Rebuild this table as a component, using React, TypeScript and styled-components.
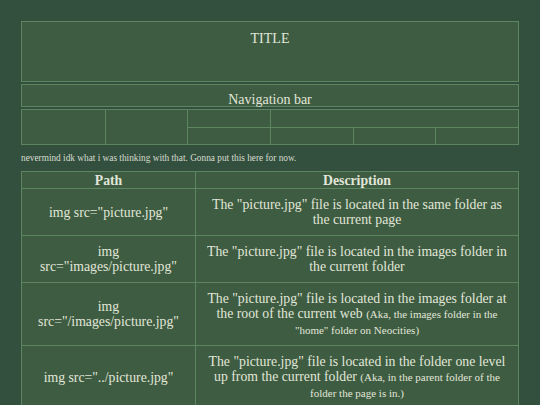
import React from "react";
import styled, { createGlobalStyle } from "styled-components";

const SERIF = `"Liberation Serif", "Times New Roman", Times, serif`;
const LINE = "#5c8560";
const PANEL = "#3d5c41";

const Global = createGlobalStyle`
  html, body { margin: 0; padding: 0; }
  body {
    background: #33503f;
    color: #e2e6da;
    font-family: ${SERIF};
  }
`;

const Page = styled.div`
  width: 498px;
  margin: 0 auto;
  padding-top: 21px;
  display: flex;
  flex-direction: column;
  gap: 2px;
  font-family: ${SERIF};
`;

const Panel = styled.div<{ $h: number; $pt: number }>`
  box-sizing: border-box;
  height: ${(p) => p.$h}px;
  padding-top: ${(p) => p.$pt}px;
  background: ${PANEL};
  border: 1px solid ${LINE};
  text-align: center;
  font-family: ${SERIF};
  font-size: 14px;
  line-height: 16px;
`;

const Grid = styled.div`
  display: grid;
  grid-template-columns: repeat(6, 1fr);
  grid-template-rows: 17px 17px;
  background: ${PANEL};
  border: 1px solid ${LINE};
  box-sizing: border-box;
  height: 36px;
`;

const Cell = styled.div<{ $col: string; $row: string; $l?: boolean; $t?: boolean }>`
  grid-column: ${(p) => p.$col};
  grid-row: ${(p) => p.$row};
  border-left: ${(p) => (p.$l ? `1px solid ${LINE}` : "none")};
  border-top: ${(p) => (p.$t ? `1px solid ${LINE}` : "none")};
`;

const Note = styled.p`
  margin: 5px 0 7px;
  font-family: ${SERIF};
  font-size: 9.3px;
  line-height: 12px;
  color: #d6dbce;
`;

const Table = styled.table`
  width: 100%;
  table-layout: fixed;
  border-collapse: collapse;
  background: ${PANEL};
  border: 1px solid ${LINE};
  font-family: ${SERIF};
  font-size: 13.75px;
  line-height: 15px;
  color: #e2e6da;
`;

const Th = styled.th<{ $w?: number }>`
  border: 1px solid ${LINE};
  padding: 0;
  height: 16px;
  font-weight: bold;
  text-align: center;
  width: ${(p) => (p.$w ? `${p.$w}px` : "auto")};
`;

const Td = styled.td<{ $h: number }>`
  border: 1px solid ${LINE};
  padding: 0 7px;
  height: ${(p) => p.$h}px;
  text-align: center;
  vertical-align: middle;
  box-sizing: border-box;
`;

const Small = styled.span`
  font-size: 11px;
`;

const rows: { path: React.ReactNode; desc: React.ReactNode; h: number }[] = [
  {
    path: 'img src="picture.jpg"',
    desc: 'The "picture.jpg" file is located in the same folder as the current page',
    h: 47,
  },
  {
    path: (
      <>
        img
        <br />
        src="images/picture.jpg"
      </>
    ),
    desc: 'The "picture.jpg" file is located in the images folder in the current folder',
    h: 47,
  },
  {
    path: (
      <>
        img
        <br />
        src="/images/picture.jpg"
      </>
    ),
    desc: (
      <>
        The "picture.jpg" file is located in the images folder at the root of the current web{" "}
        <Small>(Aka, the images folder in the "home" folder on Neocities)</Small>
      </>
    ),
    h: 63,
  },
  {
    path: 'img src="../picture.jpg"',
    desc: (
      <>
        The "picture.jpg" file is located in the folder one level up from the current folder{" "}
        <Small>(Aka, in the parent folder of the folder the page is in.)</Small>
      </>
    ),
    h: 63,
  },
];

export default function App() {
  return (
    <>
      <Global />
      <Page>
        <Panel $h={61} $pt={9}>TITLE</Panel>
        <Panel $h={23} $pt={7}>Navigation bar</Panel>
        <Grid>
          <Cell $col="1" $row="1 / 3" />
          <Cell $col="2" $row="1 / 3" $l />
          <Cell $col="3" $row="1" $l />
          <Cell $col="4 / 7" $row="1" $l />
          <Cell $col="3" $row="2" $l $t />
          <Cell $col="4" $row="2" $l $t />
          <Cell $col="5" $row="2" $l $t />
          <Cell $col="6" $row="2" $l $t />
        </Grid>
        <div>
          <Note>nevermind idk what i was thinking with that. Gonna put this here for now.</Note>
          <Table>
            <thead>
              <tr>
                <Th $w={173}>Path</Th>
                <Th>Description</Th>
              </tr>
            </thead>
            <tbody>
              {rows.map((r, i) => (
                <tr key={i}>
                  <Td $h={r.h}>{r.path}</Td>
                  <Td $h={r.h}>{r.desc}</Td>
                </tr>
              ))}
            </tbody>
          </Table>
        </div>
      </Page>
    </>
  );
}
